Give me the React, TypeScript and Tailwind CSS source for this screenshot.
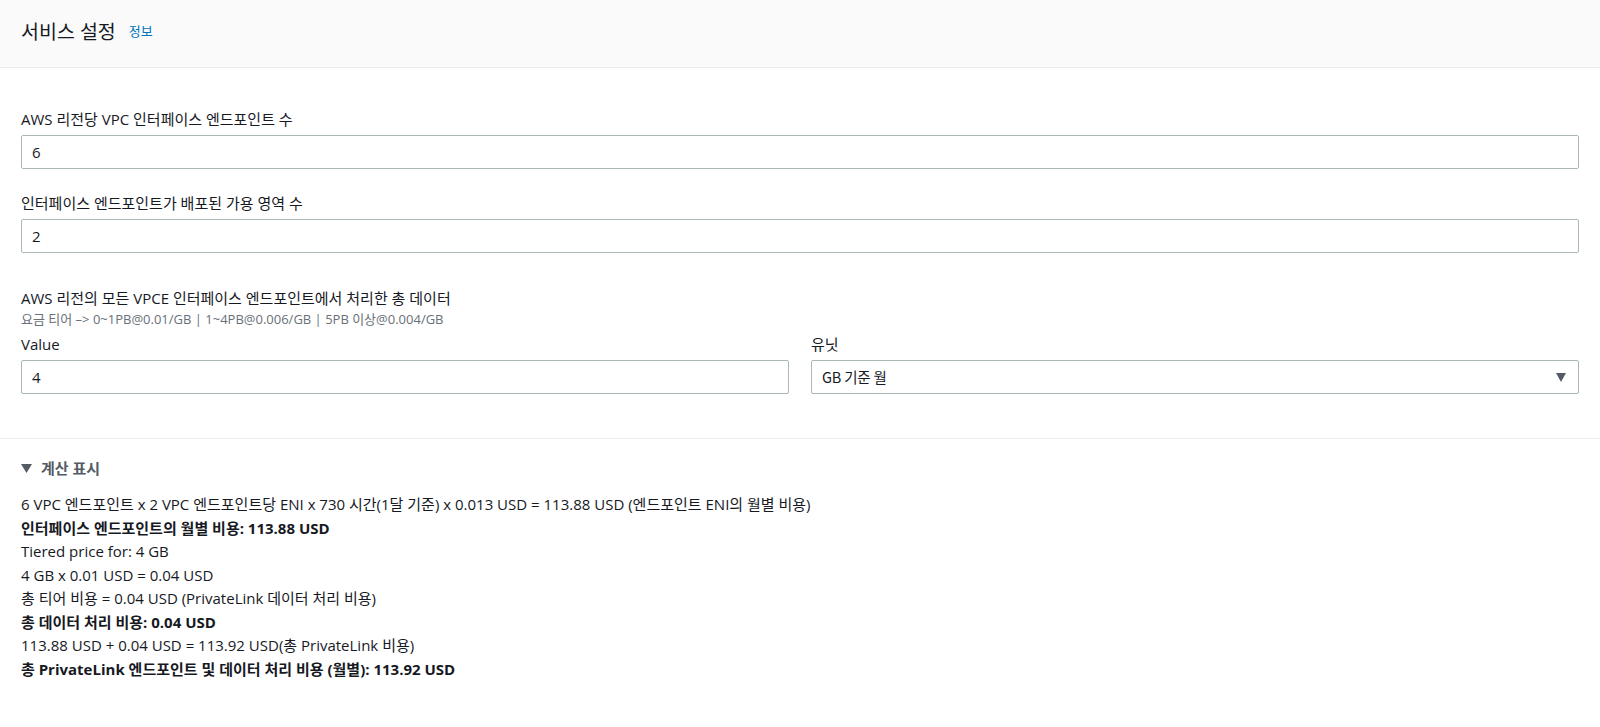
import { useState } from 'react'

const FONT = '"Open Sans", "Noto Sans CJK KR", sans-serif'

function Field({ label, value }: { label: string; value: string }) {
  return (
    <div className="flex flex-col">
      <label className="text-[15px] leading-[22px] text-[#16191f] mb-[5px]">{label}</label>
      <input
        readOnly
        value={value}
        className="h-[34px] w-full rounded-[2px] border border-[#aab7b8] bg-white px-[10px] text-[15px] text-[#16191f] outline-none"
      />
    </div>
  )
}

export default function App() {
  const [open, setOpen] = useState(true)

  const lines: { text: string; bold?: boolean }[] = [
    { text: '6 VPC 엔드포인트 x 2 VPC 엔드포인트당 ENI x 730 시간(1달 기준) x 0.013 USD = 113.88 USD (엔드포인트 ENI의 월별 비용)' },
    { text: '인터페이스 엔드포인트의 월별 비용: 113.88 USD', bold: true },
    { text: 'Tiered price for: 4 GB' },
    { text: '4 GB x 0.01 USD = 0.04 USD' },
    { text: '총 티어 비용 = 0.04 USD (PrivateLink 데이터 처리 비용)' },
    { text: '총 데이터 처리 비용: 0.04 USD', bold: true },
    { text: '113.88 USD + 0.04 USD = 113.92 USD(총 PrivateLink 비용)' },
    { text: '총 PrivateLink 엔드포인트 및 데이터 처리 비용 (월별): 113.92 USD', bold: true },
  ]

  return (
    <div className="min-h-[727px] bg-white text-[#16191f]" style={{ fontFamily: FONT }}>
      {/* Header */}
      <div className="h-[68px] bg-[#fafafa] border-b border-[#eaeded] px-[21px] flex items-center">
        <h2 className="text-[19.5px] leading-[26px] text-[#16191f] -mt-[3px]">서비스 설정</h2>
        <a className="ml-[13px] -mt-[3px] text-[13px] text-[#0073bb] cursor-pointer">정보</a>
      </div>

      {/* Form */}
      <div className="px-[21px] pt-[40px] pb-[44px] border-b border-[#eaeded] flex flex-col">
        <Field label="AWS 리전당 VPC 인터페이스 엔드포인트 수" value="6" />
        <div className="mt-[23px]">
          <Field label="인터페이스 엔드포인트가 배포된 가용 영역 수" value="2" />
        </div>
        <div className="mt-[34px] flex flex-col">
          <span className="text-[15px] leading-[23px]">AWS 리전의 모든 VPCE 인터페이스 엔드포인트에서 처리한 총 데이터</span>
          <span className="text-[13px] leading-[19px] text-[#687078]">
            요금 티어 –&gt; 0~1PB@0.01/GB | 1~4PB@0.006/GB | 5PB 이상@0.004/GB
          </span>
          <div className="mt-[4px] grid grid-cols-2 gap-x-[22px]">
            <Field label="Value" value="4" />
            <div className="flex flex-col">
              <label className="text-[15px] leading-[22px] mb-[5px]">유닛</label>
              <div className="h-[34px] rounded-[2px] border border-[#aab7b8] bg-white pl-[10px] pr-[12px] flex items-center justify-between">
                <span className="text-[14.5px] tracking-[-0.2px]" style={{ fontFamily: '"Noto Sans CJK KR", sans-serif' }}>GB 기준 월</span>
                <svg width="10" height="9" viewBox="0 0 10 9">
                  <path d="M0 0h10L5 9z" fill="#545b64" />
                </svg>
              </div>
            </div>
          </div>
        </div>
      </div>

      {/* Calculations */}
      <div className="px-[21px] pt-[18px]">
        <button
          type="button"
          onClick={() => setOpen(!open)}
          className="flex items-center gap-[9px] text-[15px] font-bold text-[#545b64] leading-[22px]"
        >
          <svg width="11" height="9" viewBox="0 0 11 9" className={open ? '' : '-rotate-90'}>
            <path d="M0 0h11L5.5 9z" fill="#545b64" />
          </svg>
          계산 표시
        </button>
        {open && (
          <div className="mt-[14px] flex flex-col text-[15px] leading-[23.5px]">
            {lines.map((l, i) => (
              <div key={i} className={l.bold ? 'font-bold' : ''}>
                {l.text}
              </div>
            ))}
          </div>
        )}
      </div>
    </div>
  )
}
